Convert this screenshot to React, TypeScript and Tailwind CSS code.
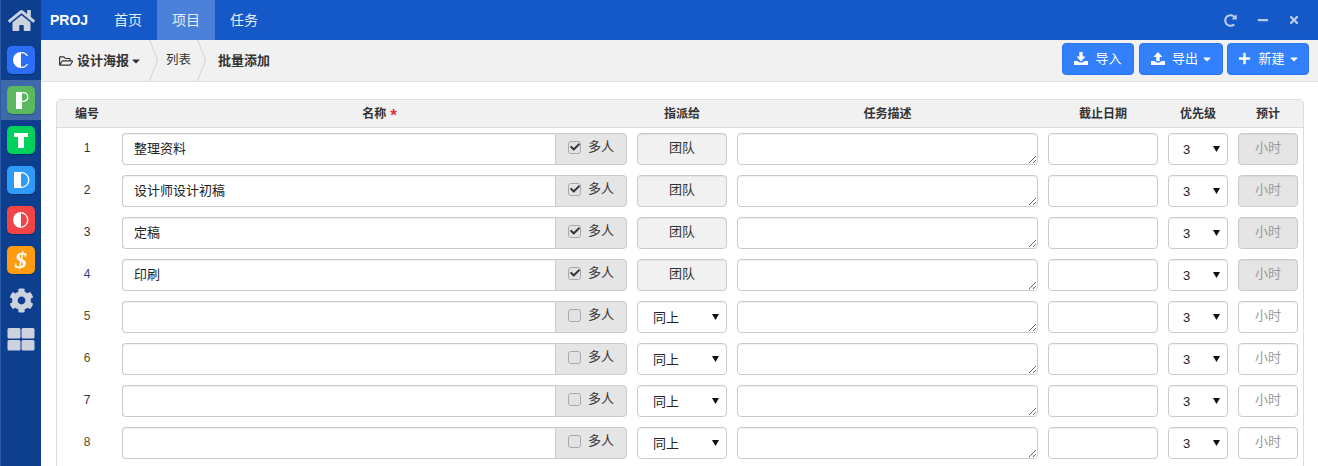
import React from "react";
import { FaHome, FaCog, FaRedoAlt, FaMinus, FaTimes, FaPlus, FaRegFolderOpen, FaCaretDown, FaCheck } from "react-icons/fa";

const font = "font-['Liberation_Sans','Noto_Sans_CJK_SC',sans-serif]";
const COLS = "grid grid-cols-[60px_515px_100px_311px_120px_70px_70px]";

function Tile({ className, children }: { className: string; children: React.ReactNode }) {
  return <div className={`w-7 h-7 rounded-[5px] flex items-center justify-center shadow-[0_1px_1px_rgba(0,0,0,0.25)] ${className}`}>{children}</div>;
}

function SideItem({ active, children }: { active?: boolean; children: React.ReactNode }) {
  return <div className={`h-10 flex items-center justify-center ${active ? "bg-[#3f69a8]" : ""}`}>{children}</div>;
}

function Logo({ children }: { children: React.ReactNode }) {
  return <svg width="28" height="28" viewBox="0 0 28 28" aria-hidden="true">{children}</svg>;
}

function Chevron() {
  return (
    <svg width="10" height="41" viewBox="0 0 10 41" className="shrink-0" aria-hidden="true">
      <polyline points="0.5,0 8.5,20 0.5,41" fill="none" stroke="#d4d4d4" strokeWidth="1" />
    </svg>
  );
}

function TrayIcon({ up }: { up?: boolean }) {
  return (
    <svg width="14" height="13" viewBox="0 0 14 13" className="shrink-0" aria-hidden="true">
      <path d={up ? "M7 0 11.5 5H8.7V9H5.3V5H2.5z" : "M5.3 0H8.7V4.5H11.5L7 9.5 2.5 4.5H5.3z"} fill="#fff" />
      <path d="M0 9H3.5L5.5 10.5H8.5L10.500 9H14V13H0z" fill="#fff" />
    </svg>
  );
}

function ActionButton({ icon, label, caret, className }: { icon: React.ReactNode; label: string; caret?: boolean; className: string }) {
  return (
    <button className={`h-8 rounded-[4px] bg-[#3280fc] border border-[#2a75ef] text-white text-[13px] flex items-center justify-center ${caret ? "pl-[2px]" : ""} ${className}`}>
      {icon}
      <span className="ml-[7px]">{label}</span>
      {caret && <FaCaretDown className="ml-[3px] text-[12px]" />}
    </button>
  );
}

const field = "h-8 rounded-[4px] border border-[#cbcbcb] bg-white shadow-[inset_0_1px_1px_rgba(0,0,0,0.06)]";

function Check({ on }: { on: boolean }) {
  return (
    <span className="w-[13px] h-[13px] shrink-0 rounded-[3px] border border-[#a8a8a8] bg-[#e2e2e2] shadow-[inset_0_0_1px_#fff] flex items-center justify-center">
      {on && <FaCheck className="text-[#333] text-[10px]" />}
    </span>
  );
}

function Select({ value, pad }: { value: string; pad: string }) {
  return (
    <div className="relative">
      <select className={`${field} appearance-none w-full ${pad} pt-[2px] text-[13px] text-[#222] outline-none`} defaultValue={value}>
        <option>{value}</option>
      </select>
      <svg width="7" height="6" viewBox="0 0 7 6" className="absolute right-[8px] top-[13px] pointer-events-none" aria-hidden="true">
        <path d="M0 0H7L3.5 6z" fill="#111" />
      </svg>
    </div>
  );
}

function Row({ index, name }: { index: number; name?: string }) {
  const team = index <= 4;
  const numberColor = ["text-[#333]", "text-[#333]", "text-[#333]", "text-[#3a3a7a]", "text-[#5a4a20]", "text-[#5a4a20]", "text-[#333]", "text-[#5a4a20]"][index - 1];
  return (
    <div className={`${COLS} h-[42px] items-center text-[13px] text-[#333]`}>
      <div className={`text-center text-xs -mt-[3px] ${numberColor}`}>{index}</div>
      <div className="pl-[5px] pr-[5px] flex">
        <div className={`${field} flex-1 rounded-r-none border-r-0 px-[11px] flex items-center text-[13px] text-[#222]`}>{name}</div>
        <label className="h-8 w-[72px] rounded-r-[4px] border border-[#cbcbcb] bg-[#e5e5e5] flex items-center pl-[12px] pb-[4px] text-[#333]">
          <Check on={team} />
          <span className="ml-[7px]">多人</span>
        </label>
      </div>
      <div className="px-[5px]">
        {team ? (
          <div className={`${field} !bg-[#f1f1f1] flex items-center justify-center pb-[2px] text-[#333]`}>团队</div>
        ) : (
          <Select value="同上" pad="pl-[15px]" />
        )}
      </div>
      <div className="px-[5px] h-8 box-content py-[5px] flex items-center">
        <textarea readOnly className={`${field} w-full block resize-y`} />
      </div>
      <div className="px-[5px]"><div className={field} /></div>
      <div className="px-[5px]">
        <Select value="3" pad="pl-[14px]" />
      </div>
      <div className="px-[5px]">
        <div className={`${field} flex items-center justify-center pb-[2px] text-[#999] ${team ? "!bg-[#e5e5e5]" : ""}`}>小时</div>
      </div>
    </div>
  );
}

export default function App() {
  const names = ["整理资料", "设计师设计初稿", "定稿", "印刷"];
  return (
    <div className={`${font} w-[1318px] h-[466px] overflow-hidden flex bg-white`}>
      <aside className="w-[41px] shrink-0 bg-[#0e3f8e] border-l border-[#2a5aa6] flex flex-col">
        <SideItem><FaHome className="text-[#ccd3df] text-[27px]" /></SideItem>
        <SideItem>
          <Tile className="bg-[#2a6ff6]">
            <Logo>
              <path d="M14 6a8 8 0 0 0 0 16z" fill="#fff" />
              <path d="M13.500 6.700a7.300 7.300 0 0 1 7 3.300M13.500 21.300a7.300 7.300 0 0 0 7-3.300" fill="none" stroke="#fff" strokeWidth="1.300" />
            </Logo>
          </Tile>
        </SideItem>
        <SideItem active>
          <Tile className="bg-[#5cb85c]">
            <Logo>
              <rect x="9" y="6" width="6" height="17" fill="#fff" />
              <path d="M14 6.700h2.500a4.300 4.300 0 0 1 0 8.600H14" fill="none" stroke="#fff" strokeWidth="1.300" />
            </Logo>
          </Tile>
        </SideItem>
        <SideItem>
          <Tile className="bg-[#00d05c]">
            <Logo>
              <path d="M7 7h14v4h-4v11h-6V11H7z" fill="#fff" />
            </Logo>
          </Tile>
        </SideItem>
        <SideItem>
          <Tile className="bg-[#2e9bfb]">
            <Logo>
              <rect x="7" y="6" width="7" height="16" fill="#fff" />
              <path d="M13 6.700h1.500a7.300 7.300 0 0 1 0 14.600H13" fill="none" stroke="#fff" strokeWidth="1.300" />
            </Logo>
          </Tile>
        </SideItem>
        <SideItem>
          <Tile className="bg-[#f24444]">
            <Logo>
              <path d="M14 6a8 8 0 0 0 0 16z" fill="#fff" />
              <path d="M13.500 6.700a7.300 7.300 0 0 1 0 14.600" fill="none" stroke="#fff" strokeWidth="1.300" />
            </Logo>
          </Tile>
        </SideItem>
        <SideItem>
          <Tile className="bg-[#ff9c0f]"><span className="font-['Liberation_Serif',serif] italic font-bold text-white text-[24px] leading-none">$</span></Tile>
        </SideItem>
        <SideItem><FaCog className="text-[#ccd3df] text-[25px]" /></SideItem>
        <SideItem>
          <svg width="28" height="23" viewBox="0 0 28 23" className="-mt-[2px]" aria-hidden="true">
            <rect x="0.500" y="0" width="13" height="10.500" rx="1.500" fill="#ccd3df" />
            <rect x="14.500" y="0" width="13" height="10.500" rx="1.500" fill="#ccd3df" />
            <rect x="0.500" y="12" width="13" height="10.500" rx="1.500" fill="#ccd3df" />
            <rect x="14.500" y="12" width="13" height="10.500" rx="1.500" fill="#ccd3df" />
          </svg>
        </SideItem>
      </aside>

      <main className="flex-1 min-w-0 flex flex-col">
        <header className="h-10 shrink-0 bg-[#1558c8] flex items-center text-white">
          <span className="ml-[9px] w-[49px] font-bold text-sm">PROJ</span>
          <nav className="flex text-sm text-[#e6edf9]">
            <a className="w-[58px] h-10 flex items-center justify-center">首页</a>
            <a className="w-[58px] h-10 flex items-center justify-center bg-[#4a80d8]">项目</a>
            <a className="w-[58px] h-10 flex items-center justify-center">任务</a>
          </nav>
          <div className="ml-auto flex items-center text-[#b9cbea]">
            <FaRedoAlt className="text-[13px]" />
            <FaMinus className="text-[12px] ml-[20px]" />
            <FaTimes className="text-[12px] ml-[19px] mr-[18px]" />
          </div>
        </header>

        <div className="h-[42px] shrink-0 bg-[#f1f1f1] border-b border-[#e0e0e0] flex items-center text-[#333]">
          <FaRegFolderOpen className="ml-[18px] text-[14px]" />
          <span className="ml-[4px] text-[13px] font-bold">设计海报</span>
          <FaCaretDown className="ml-[1px] text-[12px]" />
          <span className="ml-[7px]"><Chevron /></span>
          <span className="ml-[7px] text-[12.500px]">列表</span>
          <span className="ml-[6px]"><Chevron /></span>
          <span className="ml-[11px] text-[13px] font-bold">批量添加</span>
          <div className="ml-auto mr-[9px] flex -mt-[4px]">
            <ActionButton className="w-[72px]" icon={<TrayIcon />} label="导入" />
            <ActionButton className="w-[84px] ml-[5px]" icon={<TrayIcon up />} label="导出" caret />
            <ActionButton className="w-[82px] ml-[4px]" icon={<FaPlus className="text-[13px]" />} label="新建" caret />
          </div>
        </div>

        <div className="pt-[17px] pl-[15px] flex-1 min-h-0">
          <div className="w-[1248px] pb-[10px] rounded-t-[4px] border border-[#ddd]">
            <div className={`${COLS} h-[28px] items-center bg-[#f1f1f1] border-b border-[#ddd] text-xs font-bold text-[#333] text-center`}>
              <div>编号</div>
              <div className="flex items-center justify-center pl-[10px]">名称<span className="ml-[4px] text-[#d9363e] text-[17px] leading-none font-bold mt-[3px]">*</span></div>
              <div>指派给</div>
              <div>任务描述</div>
              <div>截止日期</div>
              <div>优先级</div>
              <div>预计</div>
            </div>
            {[1, 2, 3, 4, 5, 6, 7, 8].map((i) => (
              <Row key={i} index={i} name={names[i - 1]} />
            ))}
          </div>
        </div>
      </main>
    </div>
  );
}
